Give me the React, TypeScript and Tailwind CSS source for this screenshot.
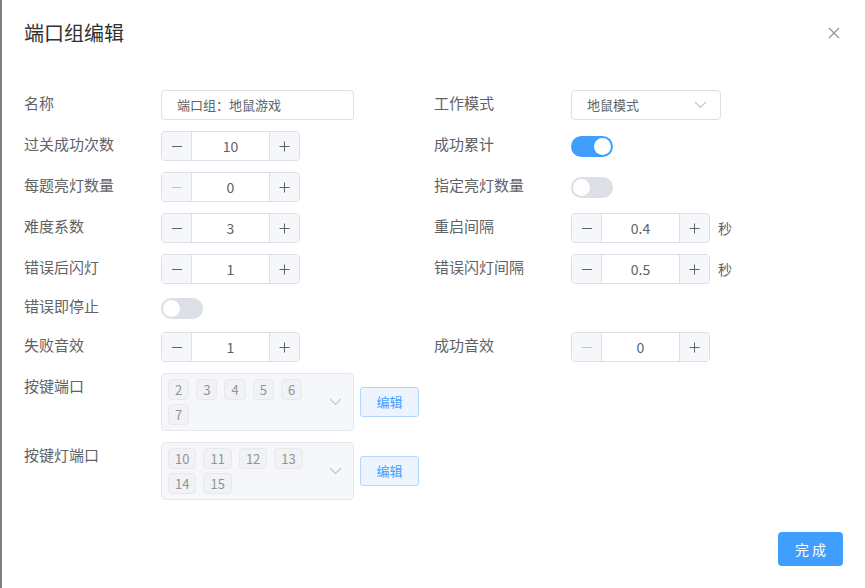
import React from "react";

const FONT = { fontFamily: '"Noto Sans CJK SC", "Noto Sans", sans-serif' };

function Minus({ disabled }: { disabled?: boolean }) {
  return (
    <div className="w-[30px] h-full bg-[#f5f7fa] border-r border-[#dcdfe6] flex items-center justify-center">
      <div className={"w-[10px] h-[1px] " + (disabled ? "bg-[#c0c4cc]" : "bg-[#606266]")} />
    </div>
  );
}

function Plus() {
  return (
    <div className="w-[30px] h-full bg-[#f5f7fa] border-l border-[#dcdfe6] flex items-center justify-center">
      <svg width="11" height="11" viewBox="0 0 11 11">
        <path d="M5.5 0.5V10.5M0.5 5.5H10.5" stroke="#606266" strokeWidth="1" />
      </svg>
    </div>
  );
}

function Stepper({ value, minDisabled }: { value: string; minDisabled?: boolean }) {
  return (
    <div className="w-[139px] h-[30px] border border-[#dcdfe6] rounded-[4px] flex overflow-hidden bg-white">
      <Minus disabled={minDisabled} />
      <div className="flex-1 flex items-center justify-center text-[14px] text-[#606266]">{value}</div>
      <Plus />
    </div>
  );
}

function Toggle({ on }: { on?: boolean }) {
  return (
    <div className="h-[30px] flex items-center">
      <div
        className={
          "w-[42px] h-[21px] rounded-full flex items-center px-[2px] " +
          (on ? "bg-[#409eff] justify-end" : "bg-[#dcdfe6] justify-start")
        }
      >
        <div className="w-[17px] h-[17px] rounded-full bg-white" />
      </div>
    </div>
  );
}

function Chevron() {
  return (
    <svg width="13" height="8" viewBox="0 0 13 8">
      <path d="M1 1L6.5 6.5L12 1" stroke="#c0c4cc" strokeWidth="1.1" fill="none" />
    </svg>
  );
}

function Label({ children }: { children: React.ReactNode }) {
  return <div className="w-[137px] shrink-0 leading-[26px] text-[15px] text-[#606266]">{children}</div>;
}

function Field({ label, children }: { label?: string; children?: React.ReactNode }) {
  return (
    <div className="w-[410px] flex items-start">
      {label ? <Label>{label}</Label> : null}
      {children}
    </div>
  );
}

function MultiSelect({ tags }: { tags: string[] }) {
  return (
    <div className="w-[193px] h-[58px] border border-[#e4e7ed] bg-[#f5f7fa] rounded-[4px] flex items-center pl-[6px] pr-[11px]">
      <div className="w-[150px] shrink-0 flex flex-wrap gap-x-[7px] gap-y-[4px]">
        {tags.map((t) => (
          <div
            key={t}
            className="h-[21px] min-w-[19px] px-[6px] border border-[#e9e9eb] bg-[#f0f2f5] rounded-[4px] text-[13px] leading-[19px] text-[#909399] text-center"
          >
            {t}
          </div>
        ))}
      </div>
      <div className="ml-auto flex items-center">
        <Chevron />
      </div>
    </div>
  );
}

function EditButton() {
  return (
    <div className="ml-[6px] w-[59px] h-[30px] border border-[#b3d8ff] bg-[#ecf5ff] rounded-[3px] flex items-center justify-center text-[13px] text-[#409eff]">
      编辑
    </div>
  );
}

export default function App() {
  return (
    <div className="w-[865px] h-[588px] bg-white flex overflow-hidden" style={FONT}>
      <div className="w-[2px] h-full bg-[#808080]" />
      <div className="flex-1 flex flex-col">
        <div className="h-[66px] flex items-center justify-between pl-[22px] pr-[25px]">
          <div className="text-[20px] leading-[26px] text-[#303133]">端口组编辑</div>
          <svg width="12" height="12" viewBox="0 0 12 12">
            <path d="M1 1L11 11M11 1L1 11" stroke="#909399" strokeWidth="1.2" />
          </svg>
        </div>

        <div className="mt-[24px] pl-[22px] flex flex-col">
          <div className="flex">
            <Field label="名称">
              <div className="w-[193px] h-[30px] border border-[#dcdfe6] rounded-[4px] flex items-center pl-[15px] text-[13px] text-[#606266]">
                端口组：地鼠游戏
              </div>
            </Field>
            <Field label="工作模式">
              <div className="w-[150px] h-[30px] border border-[#dcdfe6] rounded-[4px] flex items-center pl-[15px] pr-[13px] text-[13px] text-[#606266]">
                <span>地鼠模式</span>
                <span className="ml-auto flex items-center">
                  <Chevron />
                </span>
              </div>
            </Field>
          </div>

          <div className="flex mt-[11px]">
            <Field label="过关成功次数">
              <Stepper value="10" />
            </Field>
            <Field label="成功累计">
              <Toggle on />
            </Field>
          </div>

          <div className="flex mt-[11px]">
            <Field label="每题亮灯数量">
              <Stepper value="0" minDisabled />
            </Field>
            <Field label="指定亮灯数量">
              <Toggle />
            </Field>
          </div>

          <div className="flex mt-[11px]">
            <Field label="难度系数">
              <Stepper value="3" />
            </Field>
            <Field label="重启间隔">
              <Stepper value="0.4" />
              <div className="ml-[8px] leading-[30px] text-[14px] text-[#606266]">秒</div>
            </Field>
          </div>

          <div className="flex mt-[11px]">
            <Field label="错误后闪灯">
              <Stepper value="1" />
            </Field>
            <Field label="错误闪灯间隔">
              <Stepper value="0.5" />
              <div className="ml-[8px] leading-[30px] text-[14px] text-[#606266]">秒</div>
            </Field>
          </div>

          <div className="flex mt-[9px]">
            <Field label="错误即停止">
              <Toggle />
            </Field>
          </div>

          <div className="flex mt-[9px]">
            <Field label="失败音效">
              <Stepper value="1" />
            </Field>
            <Field label="成功音效">
              <Stepper value="0" minDisabled />
            </Field>
          </div>

          <div className="flex mt-[11px]">
            <Field label="按键端口">
              <div className="flex items-center">
                <MultiSelect tags={["2", "3", "4", "5", "6", "7"]} />
                <EditButton />
              </div>
            </Field>
          </div>

          <div className="flex mt-[11px]">
            <Field label="按键灯端口">
              <div className="flex items-center">
                <MultiSelect tags={["10", "11", "12", "13", "14", "15"]} />
                <EditButton />
              </div>
            </Field>
          </div>
        </div>

        <div className="mt-auto flex justify-end pr-[22px] pb-[22px]">
          <div className="w-[65px] h-[34px] bg-[#409eff] rounded-[4px] flex items-center justify-center text-[14px] text-white tracking-[3px] pl-[3px]">
            完成
          </div>
        </div>
      </div>
    </div>
  );
}
